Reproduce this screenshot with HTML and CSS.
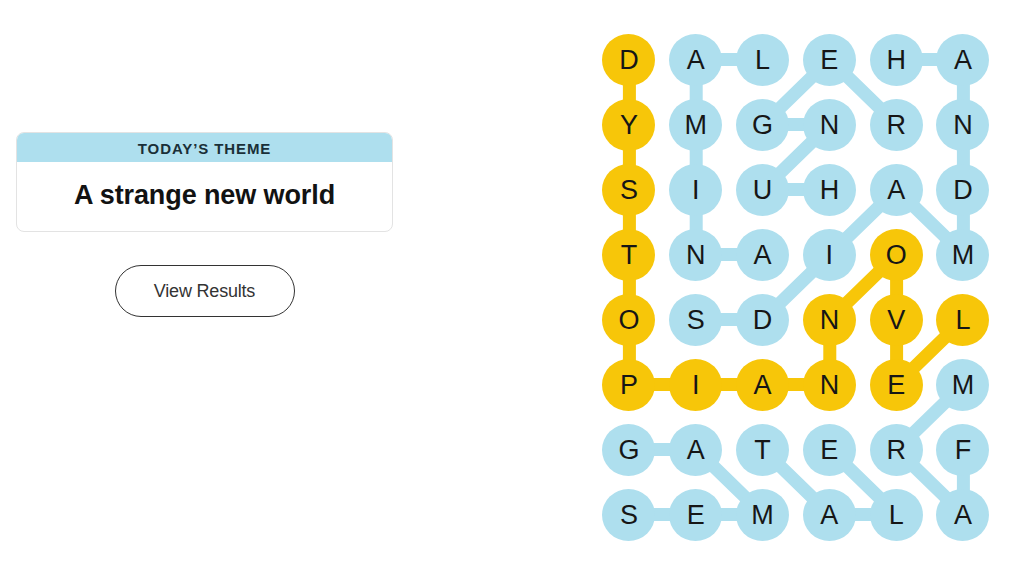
FILE: index.html
```html
<!DOCTYPE html>
<html lang="en">
<head>
<meta charset="utf-8">
<title>Strands</title>
<link rel="stylesheet" href="styles.css">
</head>
<body>
<main class="page">
  <section class="side">
    <div class="theme-card">
      <div class="theme-head">TODAY’S THEME</div>
      <div class="theme-body">A strange new world</div>
    </div>
    <button class="results-btn" type="button">View Results</button>
  </section>
  <section class="board">
    <svg class="links" viewBox="0 0 400.8 520" width="400.8" height="520" aria-hidden="true">
      <g fill="none" stroke-width="13" stroke-linejoin="round" stroke-linecap="round">
        <polyline class="l-blue" points="167,227.5 100.2,227.5 100.2,32.5 167,32.5"/>
        <polyline class="l-blue" points="300.6,32.5 367.4,32.5 367.4,227.5 300.6,162.5 233.8,227.5 167,292.5 100.2,292.5"/>
        <polyline class="l-blue" points="233.8,162.5 167,162.5 233.8,97.5 167,97.5 233.8,32.5 300.6,97.5"/>
        <polyline class="l-blue" points="367.4,422.5 367.4,487.5 300.6,422.5 367.4,357.5"/>
        <polyline class="l-blue" points="33.4,422.5 100.2,422.5 167,487.5 33.4,487.5"/>
        <polyline class="l-blue" points="167,422.5 233.8,487.5 300.6,487.5 233.8,422.5"/>
        <polyline class="l-gold" points="33.4,32.5 33.4,357.5 233.8,357.5 233.8,292.5 300.6,227.5 300.6,357.5 367.4,292.5"/>
      </g>
    </svg>
    <div class="grid">
      <span class="cell g">D</span><span class="cell b">A</span><span class="cell b">L</span><span class="cell b">E</span><span class="cell b">H</span><span class="cell b">A</span>
      <span class="cell g">Y</span><span class="cell b">M</span><span class="cell b">G</span><span class="cell b">N</span><span class="cell b">R</span><span class="cell b">N</span>
      <span class="cell g">S</span><span class="cell b">I</span><span class="cell b">U</span><span class="cell b">H</span><span class="cell b">A</span><span class="cell b">D</span>
      <span class="cell g">T</span><span class="cell b">N</span><span class="cell b">A</span><span class="cell b">I</span><span class="cell g">O</span><span class="cell b">M</span>
      <span class="cell g">O</span><span class="cell b">S</span><span class="cell b">D</span><span class="cell g">N</span><span class="cell g">V</span><span class="cell g">L</span>
      <span class="cell g">P</span><span class="cell g">I</span><span class="cell g">A</span><span class="cell g">N</span><span class="cell g">E</span><span class="cell b">M</span>
      <span class="cell b">G</span><span class="cell b">A</span><span class="cell b">T</span><span class="cell b">E</span><span class="cell b">R</span><span class="cell b">F</span>
      <span class="cell b">S</span><span class="cell b">E</span><span class="cell b">M</span><span class="cell b">A</span><span class="cell b">L</span><span class="cell b">A</span>
    </div>
  </section>
</main>
</body>
</html>
```

FILE: styles.css
```css
* { box-sizing: border-box; }

html, body {
  margin: 0;
  padding: 0;
  background: #ffffff;
}

body {
  width: 1024px;
  height: 576px;
  overflow: hidden;
  font-family: "Liberation Sans", Arial, sans-serif;
  color: #121212;
}

.page {
  display: flex;
  align-items: flex-start;
}

.side {
  width: 377px;
  margin-left: 16px;
  margin-top: 132px;
  display: flex;
  flex-direction: column;
  align-items: center;
}

.theme-card {
  width: 100%;
  border: 1px solid #e3e3e3;
  border-radius: 8px;
  overflow: hidden;
  background: #fff;
}

.theme-head {
  height: 29px;
  background: #aedfee;
  color: #1a2f38;
  font-weight: 700;
  font-size: 15px;
  letter-spacing: 0.9px;
  display: flex;
  align-items: center;
  justify-content: center;
  padding-top: 1px;
}

.theme-body {
  height: 69px;
  display: flex;
  align-items: center;
  justify-content: center;
  font-weight: 700;
  font-size: 27px;
  letter-spacing: -0.1px;
  color: #121212;
  padding-bottom: 2px;
}

.results-btn {
  margin-top: 33px;
  width: 180px;
  height: 52px;
  border: 1px solid #333;
  border-radius: 26px;
  background: #fff;
  font-family: "Liberation Sans", Arial, sans-serif;
  font-size: 18px;
  color: #333;
  letter-spacing: -0.2px;
}

.board {
  position: relative;
  width: 400.8px;
  height: 520px;
  margin-left: 202.6px;
  margin-top: 27px;
}

.links {
  position: absolute;
  left: 0;
  top: 0;
}

.l-blue { stroke: #aedfee; }
.l-gold { stroke: #f7c609; }

.grid {
  position: relative;
  display: grid;
  grid-template-columns: repeat(6, 66.8px);
  grid-template-rows: repeat(8, 65px);
}

.cell {
  justify-self: center;
  align-self: center;
  width: 53px;
  height: 52px;
  border-radius: 50%;
  display: flex;
  align-items: center;
  justify-content: center;
  font-size: 27px;
  color: #161616;
  padding-top: 1px;
}

.cell.b { background: #aedfee; }
.cell.g { background: #f7c609; }
```
